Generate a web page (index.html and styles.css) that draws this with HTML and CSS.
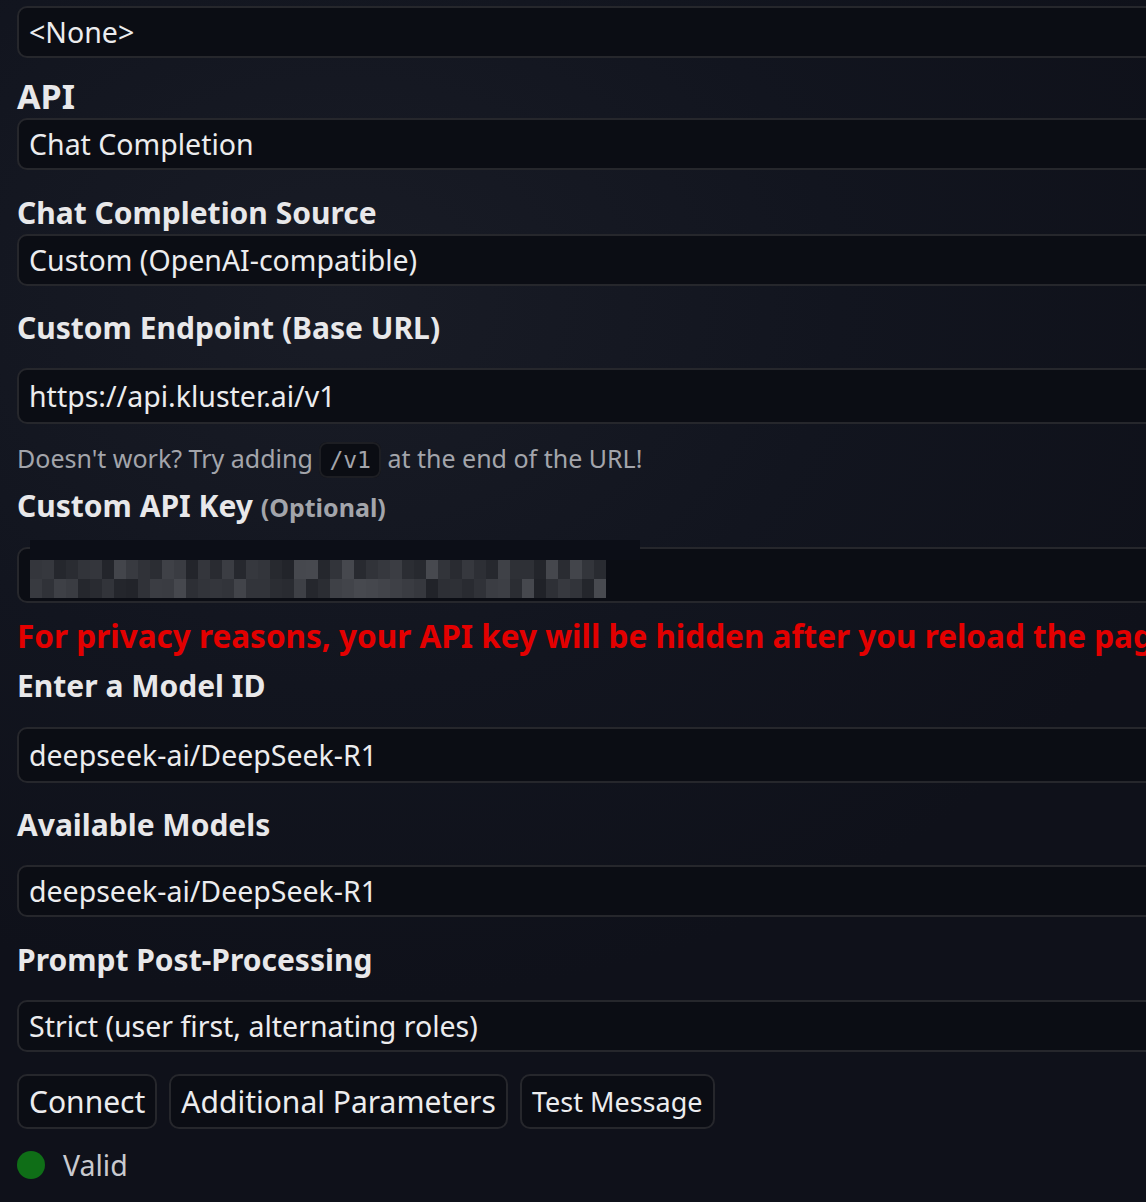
FILE: index.html
```html
<!DOCTYPE html>
<html lang="en">
<head>
  <meta charset="UTF-8">
  <title>API Connections</title>
  <link rel="stylesheet" href="styles.css">
</head>
<body>
  <div class="painel">
    <div class="caixa select">&lt;None&gt;</div>

    <h3 class="titulo-api">API</h3>
    <div class="caixa select">Chat Completion</div>

    <h4 class="titulo junto">Chat Completion Source</h4>
    <div class="caixa select">Custom (OpenAI-compatible)</div>

    <h4 class="titulo">Custom Endpoint (Base URL)</h4>
    <div class="caixa texto">https://api.kluster.ai/v1</div>
    <p class="dica">Doesn't work? Try adding <code>/v1</code> at the end of the URL!</p>

    <h4 class="titulo titulo-chave">Custom API Key <span class="opcional">(Optional)</span></h4>
    <div class="caixa texto chave">
      <div class="borrado">
        <div class="faixa"></div>
        <div class="blocos" id="blocos"></div>
      </div>
    </div>

    <p class="aviso">For privacy reasons, your API key will be hidden after you reload the page.</p>

    <h4 class="titulo titulo-modelo">Enter a Model ID</h4>
    <div class="caixa texto">deepseek-ai/DeepSeek-R1</div>

    <h4 class="titulo">Available Models</h4>
    <div class="caixa select">deepseek-ai/DeepSeek-R1</div>

    <h4 class="titulo titulo-pp">Prompt Post-Processing</h4>
    <div class="caixa select">Strict (user first, alternating roles)</div>

    <div class="botoes">
      <div class="botao">Connect</div>
      <div class="botao">Additional Parameters</div>
      <div class="botao pequeno">Test Message</div>
    </div>

    <div class="status">
      <span class="ponto"></span>
      <span>Valid</span>
    </div>
  </div>

  <script>
    // pixelated key, deterministic shades
    let semente = 7;
    function aleatorio() {
      semente = (semente * 9301 + 49297) % 233280;
      return semente / 233280;
    }
    const blocos = document.getElementById("blocos");
    for (let i = 0; i < 96; i++) {
      const tom = Math.round(32 + aleatorio() * 40);
      const cor = `rgb(${tom}, ${tom + 2}, ${tom + 8})`;
      blocos.insertAdjacentHTML("beforeend", `<span style="background:${cor}"></span>`);
    }
  </script>
</body>
</html>
```

FILE: styles.css
```css
html, body {
  margin: 0;
  height: 100%;
  overflow: hidden;
}
body {
  font-family: "Noto Sans", sans-serif;
  font-size: 28.5px;
  color: #e8e8ea;
  background: radial-gradient(ellipse 900px 700px at 30% 25%, #191c26 0%, #12151f 55%, #0f111a 100%);
}
.painel {
  width: 1300px;
  padding: 6px 17px 0;
}
.caixa {
  box-sizing: border-box;
  width: 100%;
  border: 2px solid #26272c;
  border-radius: 10px;
  background: #0b0d14;
  padding: 0 10px;
  display: flex;
  align-items: center;
  color: #ececee;
  line-height: 1;
}
.select {
  height: 52px;
}
.texto {
  height: 56px;
}
h3, h4, p {
  margin: 0;
}
.titulo-api {
  font-size: 34px;
  line-height: 40px;
  margin: 18px 0 2px;
}
.titulo {
  font-size: 30px;
  line-height: 40px;
  margin: 22px 0 20px;
}
.titulo.junto {
  margin: 23px 0 1px;
}
.dica {
  font-size: 25px;
  line-height: 36px;
  margin-top: 16px;
  color: #a3a5ab;
}
code {
  font-family: "DejaVu Sans Mono", monospace;
  font-size: 23px;
  color: #a3a5ab;
  background: #0b0d13;
  border: 2px solid #1d1e23;
  border-radius: 8px;
  padding: 3px 8px;
}
.titulo-chave {
  margin: 8px 0 20px;
}
.opcional {
  font-size: 25px;
  color: #a3a5ab;
}
.chave {
  position: relative;
}
.borrado {
  position: absolute;
  left: 11px;
  top: -9px;
  width: 610px;
  height: 60px;
}
.faixa {
  height: 20px;
  background: #0c0e17;
}
.blocos {
  display: grid;
  grid-template-columns: repeat(48, 12px);
  grid-auto-rows: 19px;
  width: 576px;
  background: #0c0e17;
}
.aviso {
  font-size: 31.5px;
  font-weight: bold;
  line-height: 40px;
  margin-top: 13px;
  color: #e30000;
  white-space: nowrap;
}
.titulo-modelo {
  margin: 10px 0 21px;
}
.titulo-pp {
  margin-top: 23px;
}
.botoes {
  display: flex;
  gap: 12px;
  margin-top: 22px;
}
.botao {
  box-sizing: border-box;
  height: 55px;
  padding: 0 10px;
  border: 2px solid #26272c;
  border-radius: 10px;
  background: #0b0d14;
  display: flex;
  align-items: center;
  color: #ececee;
  font-size: 30px;
}
.botao.pequeno {
  font-size: 27px;
}
.status {
  display: flex;
  align-items: center;
  gap: 18px;
  margin-top: 16px;
  height: 40px;
  color: #c9cacf;
}
.ponto {
  width: 28px;
  height: 28px;
  border-radius: 50%;
  background: #0f6e17;
}
```
